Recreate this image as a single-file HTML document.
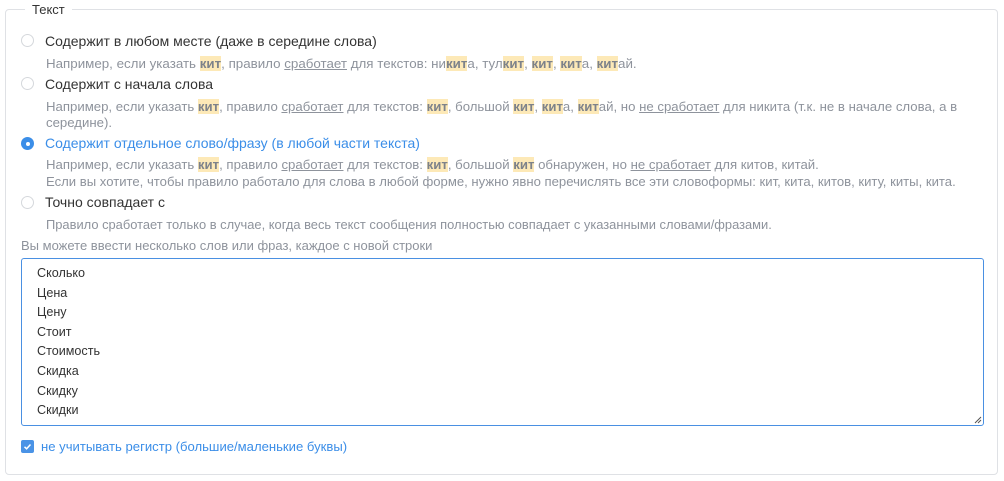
<!DOCTYPE html><html><head><meta charset="utf-8"><style>
body{margin:0;width:1004px;height:481px;background:#fff;font-family:"Liberation Sans","DejaVu Sans",sans-serif;position:relative;overflow:hidden}
.fs{position:absolute;left:5px;top:9px;width:993px;height:466px;border:1px solid #dfe1e5;border-radius:4px;box-sizing:border-box}
.lg{position:absolute;left:25px;top:2px;background:#fff;padding:0 7px;font-size:13px;color:#333;line-height:16px}
.t{position:absolute;white-space:nowrap}
.lab{left:45px;font-size:14px;color:#333;line-height:18px}
.d{left:46px;font-size:13.2px;color:#8e939c;line-height:17px}
.r{position:absolute;left:21px;width:13px;height:13px;border:1px solid #d5d8dc;border-radius:50%;box-sizing:border-box;background:#fff}
.r.on{border:none;background:#3b8ee8}
.r.on:after{content:"";position:absolute;left:4.5px;top:4.5px;width:4px;height:4px;border-radius:50%;background:#fff}
b{font-weight:bold;color:#7d828a;background:#fde9b7}
u{text-decoration:underline}
.ta{position:absolute;left:21px;top:258px;width:963px;height:168px;border:1px solid #4a90e2;border-radius:3px;box-sizing:border-box;padding:5px 15px;font-size:12.6px;color:#333;line-height:19.6px}
</style></head><body>
<div class="fs"></div>
<div class="lg">Текст</div>
<div class="r" style="top:34px"></div>
<div class="t lab" style="top:32px">Содержит в любом месте (даже в середине слова)</div>
<div class="t d" style="top:55px;font-size:13.35px">Например, если указать <b>кит</b>, правило <u>сработает</u> для текстов: ни<b>кит</b>а, тул<b>кит</b>, <b>кит</b>, <b>кит</b>а, <b>кит</b>ай.</div>
<div class="r" style="top:77px"></div>
<div class="t lab" style="top:75px">Содержит с начала слова</div>
<div class="t d" style="top:98px">Например, если указать <b>кит</b>, правило <u>сработает</u> для текстов: <b>кит</b>, большой <b>кит</b>, <b>кит</b>а, <b>кит</b>ай, но <u>не сработает</u> для никита (т.к. не в начале слова, а в</div>
<div class="t d" style="top:114px">середине).</div>
<div class="r on" style="top:137px"></div>
<div class="t lab" style="top:134px;color:#3b8ee8">Содержит отдельное слово/фразу (в любой части текста)</div>
<div class="t d" style="top:156px">Например, если указать <b>кит</b>, правило <u>сработает</u> для текстов: <b>кит</b>, большой <b>кит</b> обнаружен, но <u>не сработает</u> для китов, китай.</div>
<div class="t d" style="top:173px;font-size:13.12px">Если вы хотите, чтобы правило работало для слова в любой форме, нужно явно перечислять все эти словоформы: кит, кита, китов, киту, киты, кита.</div>
<div class="r" style="top:196px"></div>
<div class="t lab" style="top:193px">Точно совпадает с</div>
<div class="t d" style="top:216px;font-size:12.9px">Правило сработает только в случае, когда весь текст сообщения полностью совпадает с указанными словами/фразами.</div>
<div class="t d" style="top:237px;left:21px;font-size:13px">Вы можете ввести несколько слов или фраз, каждое с новой строки</div>
<div class="ta">Сколько<br>Цена<br>Цену<br>Стоит<br>Стоимость<br>Скидка<br>Скидку<br>Скидки
<svg style="position:absolute;right:1px;bottom:1px" width="8" height="8"><path d="M1 7L7 1M4 7L7 4" stroke="#555" stroke-width="1"/></svg></div>
<div style="position:absolute;left:21px;top:440px;width:13px;height:13px;border-radius:2px;background:#4a93e6"><svg width="13" height="13"><path d="M3.5 6.8L5.6 8.8L9.5 4.5" fill="none" stroke="#fff" stroke-width="1.5"/></svg></div>
<div class="t" style="left:41px;top:438px;font-size:13.1px;color:#3b8ee8;line-height:17px">не учитывать регистр (большие/маленькие буквы)</div>
</body></html>
